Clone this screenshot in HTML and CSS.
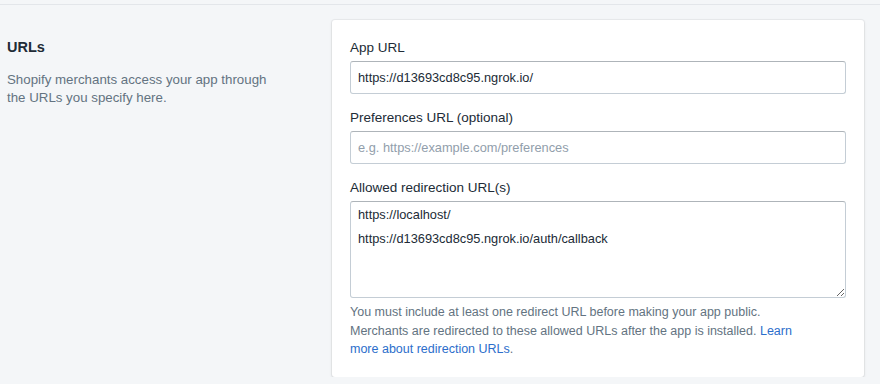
FILE: index.html
```html
<!DOCTYPE html>
<html lang="en">
  <head>
    <meta charset="UTF-8">
    <title>App setup – URLs</title>
    <link rel="stylesheet" href="styles.css">
  </head>
  <body>
    <div class="top"></div>
    <section class="layout">
      <div class="annot">
        <h2>URLs</h2>
        <p>Shopify merchants access your app through the URLs you specify here.</p>
      </div>
      <form class="card">
        <label class="fld">App URL
          <input class="i" value="https://d13693cd8c95.ngrok.io/">
        </label>
        <label class="fld">Preferences URL (optional)
          <input class="i" placeholder="e.g. https://example.com/preferences">
        </label>
        <label class="fld">Allowed redirection URL(s)
          <textarea class="i ta">https://localhost/
https://d13693cd8c95.ngrok.io/auth/callback</textarea>
        </label>
        <p class="help">You must include at least one redirect URL before making your app public. Merchants are redirected to these allowed URLs after the app is installed. <a href="#">Learn more about redirection URLs</a>.</p>
      </form>
    </section>
  </body>
</html>
```

FILE: styles.css
```css
body {margin: 0; background: #f4f6f8; color: #212b36;
  font-family: 'Liberation Sans', Arial, sans-serif; font-size: 13px;}
.top {height: 4px; border-bottom: 1px solid #e3e6ea;}
.layout {display: flex; padding: 15px 16px 0 7px;}
.annot {width: 325px; flex: none; padding-top: 15px;}
h2 {font-size: 14.5px; font-weight: 700; line-height: 24px; margin: 0;}
.annot p {color: #637381; font-size: 13.3px; line-height: 18px;
  margin: 12px 0 0; width: 275px;}
.card {flex: 1; background: #fff; border-radius: 3px;
  box-shadow: 0 0 0 1px #3f3f440d, 0 1px 3px #3f3f4426;
  padding: 19px 18px 18px; display: flex; flex-flow: column;}
.fld {display: flex; flex-flow: column; gap: 4px; line-height: 18px;
  font-size: 13.5px; margin-bottom: 15px;}
.fld:last-of-type {margin-bottom: 0;}
.i {font: inherit; font-size: 12.8px; color: #212b36; height: 33px;
  box-sizing: border-box; padding: 0 7px; border: 1px solid #c4cdd5;
  border-top-color: #aeb4b9; border-radius: 3px; outline: 0;}
.i::placeholder {color: #919eab;}
.ta {height: 97px; padding: 1px 7px; line-height: 24px; resize: vertical;}
.help {color: #637381; font-size: 12.5px; line-height: 18.5px;
  margin: 5px 0 0; max-width: 470px;}
.help a {color: #2c6ecb; text-decoration: none;}
```
